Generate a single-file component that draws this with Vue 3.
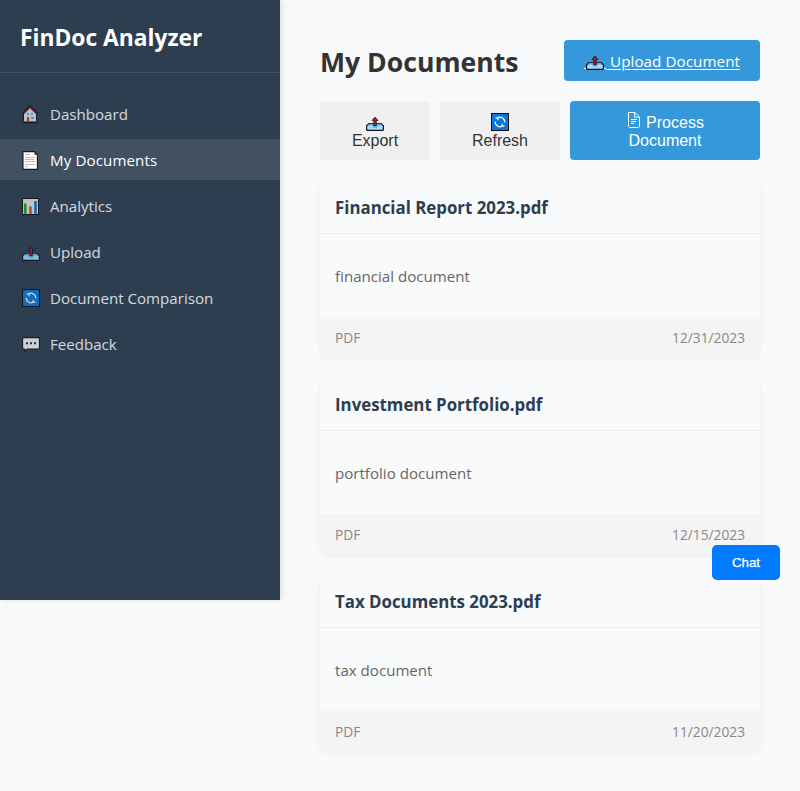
<script setup>
import { h } from 'vue'

const paths = {
  home: [
    ['rect', { x: 3.5, y: 9, width: 13, height: 9, fill: '#e4e6eb', stroke: '#111', 'stroke-width': 1 }],
    ['path', { d: 'M4 9.5 10 3.5 16 9.5V17H4Z', fill: '#e4e6eb' }],
    ['path', { d: 'M2.6 10 10 2.6 17.4 10', fill: 'none', stroke: '#16100f', 'stroke-width': 2.2 }],
    ['path', { d: 'M3.5 9.9 10 3.5 16.5 9.9', fill: 'none', stroke: '#c93624', 'stroke-width': 1.1 }],
    ['path', { d: 'M2 18.5H18', stroke: '#111', 'stroke-width': 1.4 }],
    ['path', { d: 'M3 17.5H17', stroke: '#16a52c', 'stroke-width': 1 }],
    ['path', { d: 'M7 9h2v2H7ZM11 9h2v2h-2ZM11 13h3v2h-3Z', fill: '#38b8ed' }],
    ['rect', { x: 7, y: 13, width: 2.2, height: 4.5, fill: '#d13b20' }]
  ],
  page: [
    ['path', { d: 'M3 1.6H14.6L17.4 4.6V19.4H3Z', fill: '#fff', stroke: '#171717', 'stroke-width': 1.1 }],
    ['path', { d: 'M14.5 2V4.8H17Z', fill: '#222' }],
    ['path', { d: 'M5 4.5h5M5 7.5h10M5 9.5h9M5 11.5h10M5 14.5h10M5 16.5h3', stroke: '#b9b9b9', 'stroke-width': 1 }]
  ],
  chart: [
    ['rect', { x: 2.5, y: 2.5, width: 16, height: 16, fill: '#e4e6ea', stroke: '#111', 'stroke-width': 1 }],
    ['path', { d: 'M4 17.8V7.5h2.6V17.8Z', fill: '#16a516' }],
    ['path', { d: 'M9.2 17.8V10.5h2.6V17.8Z', fill: '#e04a27' }],
    ['path', { d: 'M14.2 17.8V5h2.6V17.8Z', fill: '#0873d0' }]
  ],
  upload: [
    ['path', { d: 'M5 11.5H17L19.4 13.8V17.7L18.7 18.4H3.3L2.6 17.7V13.8Z', fill: '#a9daf8', stroke: '#101418', 'stroke-width': 1.2 }],
    ['path', { d: 'M5.6 11.8H16.4L18.2 13.6H14L12.8 15.8H9.2L8 13.6H3.8Z', fill: '#5aaef0' }],
    ['path', { d: 'M11 4.8 7.4 8.7H9.4V14H12.6V8.7H14.6Z', fill: '#141014' }],
    ['path', { d: 'M11 6 8.8 8.2H10.3V13.6H11.7V8.2H13.2Z', fill: '#e0132d' }]
  ],
  sync: [
    ['rect', { x: 2.5, y: 1.5, width: 17, height: 17, fill: '#0878dc', stroke: '#080c10', 'stroke-width': 1 }],
    ['path', { d: 'M8 6.4A4.7 4.7 0 0 1 15.7 10.4M14 13.6A4.7 4.7 0 0 1 6.3 9.6M6.6 5.8H9V8.2M15.4 14.2H13V11.8', fill: 'none', stroke: '#fff', 'stroke-width': 1.2 }]
  ],
  chat: [
    ['path', { d: 'M3.3 3.6H18.7L19.4 4.3V14.3L18.7 15H7L4.6 17.4V15H3.3L2.6 14.3V4.3Z', fill: '#f4f5f7', stroke: '#14171a', 'stroke-width': 1.1 }],
    ['path', { d: 'M6 8.2h2v2H6ZM10 8.2h2v2h-2ZM14 8.2h2v2h-2Z', fill: '#24282c' }]
  ],
  file: [
    ['path', { d: 'M5.5 2.5H12L16.5 7V16.5L15.5 17.5H6.5L5.5 16.5ZM11.7 2.8V7.2H16.2', fill: 'none', stroke: '#fff', 'stroke-width': 1 }],
    ['path', { d: 'M8 9.5H14M8 11.5H13M8 13.5H11', stroke: '#fff', 'stroke-width': 1 }]
  ]
}

const Icon = (props) =>
  h('svg', { width: 20, height: 20, viewBox: '0 0 20 20', 'aria-hidden': 'true' }, paths[props.name].map(([tag, attrs]) => h(tag, attrs)))
Icon.props = ['name']

const nav = [
  { icon: 'home', label: 'Dashboard' },
  { icon: 'page', label: 'My Documents', active: true },
  { icon: 'chart', label: 'Analytics' },
  { icon: 'upload', label: 'Upload' },
  { icon: 'sync', label: 'Document Comparison' },
  { icon: 'chat', label: 'Feedback' }
]
const documents = [
  { name: 'Financial Report 2023.pdf', text: 'financial document', date: '12/31/2023' },
  { name: 'Investment Portfolio.pdf', text: 'portfolio document', date: '12/15/2023' },
  { name: 'Tax Documents 2023.pdf', text: 'tax document', date: '11/20/2023' }
]
</script>

<template>
  <div class="layout">
    <aside class="sidebar">
      <div class="brand"><span>FinDoc Analyzer</span></div>
      <nav class="nav">
        <a v-for="item in nav" :key="item.label" class="nav-item" :class="{ active: item.active }">
          <Icon :name="item.icon" class="icon" />
          <span>{{ item.label }}</span>
        </a>
      </nav>
    </aside>
    <main class="main">
      <header class="header">
        <h1>My Documents</h1>
        <a class="upload"><Icon name="upload" class="icon" /><span>&nbsp;Upload Document</span></a>
      </header>
      <div class="actions">
        <button class="btn export"><Icon name="upload" class="icon" /><span>Export</span></button>
        <button class="btn refresh"><Icon name="sync" class="icon" /><span>Refresh</span></button>
        <button class="btn process">
          <span class="row"><Icon name="file" class="icon" /><span>Process</span></span>
          <span>Document</span>
        </button>
      </div>
      <section class="cards">
        <article v-for="doc in documents" :key="doc.name" class="card">
          <h3>{{ doc.name }}</h3>
          <p>{{ doc.text }}</p>
          <footer><span>PDF</span><span>{{ doc.date }}</span></footer>
        </article>
      </section>
    </main>
    <button class="chat">Chat</button>
  </div>
</template>

<style>
body { margin: 0; background: #f8f9fb; }
</style>

<style scoped>
* { box-sizing: border-box; }
.layout { position: relative; display: flex; align-items: flex-start; height: 791px; overflow: hidden; font-family: "Open Sans", "Noto Sans", sans-serif; font-size: 15.1px; color: #333; }
.icon { display: block; flex: none; overflow: visible; }
.sidebar { width: 280px; height: 600px; flex: none; background: #2c3e50; box-shadow: 2px 0 5px rgba(0, 0, 0, .1); }
.brand { height: 73px; padding: 23px 20px; border-bottom: 1px solid rgba(255, 255, 255, .1); color: #fff; font-size: 22.8px; line-height: 30px; font-weight: 700; white-space: nowrap; }
.nav { display: flex; flex-direction: column; gap: 5px; padding-top: 20px; }
.nav-item { display: flex; gap: 10px; height: 41px; padding: 11px 20px 10px; line-height: 20px; color: #fff; opacity: .8; white-space: nowrap; }
.nav-item.active { opacity: 1; background: rgba(255, 255, 255, .1); letter-spacing: .12px; }
.main { flex: 1; padding: 40px; }
.header { display: flex; justify-content: space-between; height: 41px; white-space: nowrap; }
h1 { margin: 0; font-size: 26.6px; line-height: 44px; font-weight: 700; color: #333; }
.upload { position: relative; display: flex; width: 196px; height: 41px; padding: 11px 20px 0; border-radius: 4px; background: #3498db; color: #fff; line-height: 20px; font-size: 15.2px; text-decoration: underline; text-underline-offset: 2px; text-decoration-thickness: 1px; }
.upload > span { padding-left: 2px; letter-spacing: .06px; }
.upload::before { content: ""; position: absolute; left: 20px; top: 28px; width: 2px; height: 1px; background: #fff; }
.upload::after { content: ""; position: absolute; left: 40px; top: 28px; width: 2px; height: 1px; background: #fff; }
.actions { display: flex; gap: 10px; height: 59px; margin: 20px 0; }
.btn { display: flex; flex-direction: column; align-items: center; padding: 11px 0 0; border: 0; border-radius: 4px; background: #f0f0f0; color: #333; font: 16px/18px "Liberation Sans", Arial, sans-serif; }
.btn > .icon { margin-left: -2px; }
.export { width: 110px; }
.refresh { width: 120px; }
.process { width: 190px; padding-top: 9px; background: #3498db; color: #fff; }
.row { display: flex; gap: 3px; height: 21px; margin-left: -3px; }
.process .row > span { padding-top: 4px; }
.process > span:last-child { padding-top: 1px; }
.cards { display: flex; flex-direction: column; gap: 20px; }
.card { height: 177px; border-radius: 8px; overflow: hidden; background: #f9fafc; box-shadow: 0 2px 5px rgba(0, 0, 0, .05); }
h3 { height: 54px; margin: 0; padding: 0 15px; border-bottom: 1px solid #edeef0; font-size: 16.85px; line-height: 55px; font-weight: 700; color: #2c3e50; }
p { height: 83px; margin: 0; padding: 0 15px; line-height: 84px; color: #666; }
footer { display: flex; justify-content: space-between; height: 40px; padding: 0 15px; line-height: 42px; background: #f4f4f4; font-size: 13.75px; color: #888; }
.chat { position: absolute; top: 545px; right: 20px; width: 68px; height: 35px; padding: 0; border: 0; border-radius: 5px; background: #007bff; color: #fff; font: 13.333px "Liberation Sans", Arial, sans-serif; -webkit-text-stroke: .25px #fff; }
</style>
